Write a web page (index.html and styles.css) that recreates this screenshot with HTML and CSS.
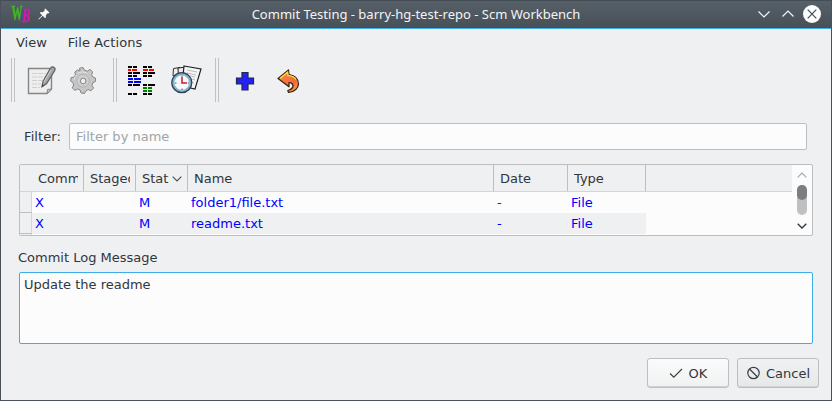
FILE: index.html
```html
<!DOCTYPE html>
<html lang="en">
<head>
<meta charset="utf-8">
<title>Commit Testing - barry-hg-test-repo - Scm Workbench</title>
<link rel="stylesheet" href="styles.css">
</head>
<body>
<div class="window">
  <header class="titlebar">
    <div class="title-left">
      <svg class="logo" width="20" height="20" viewBox="0 0 20 20">
        <g font-family="Liberation Serif" font-weight="bold">
          <text x="0.5" y="15.5" font-size="20" textLength="11" lengthAdjust="spacingAndGlyphs" fill="#40b81c" stroke="#40b81c" stroke-width=".4">W</text>
          <text x="10.6" y="18.4" font-size="18" font-style="italic" textLength="8" lengthAdjust="spacingAndGlyphs" fill="#d613b4" stroke="#d613b4" stroke-width=".3">B</text>
        </g>
      </svg>
      <svg class="pin" width="12" height="12" viewBox="0 0 12 12">
        <path d="M7.2 0.6 11.4 4.6 10.5 5.4 9.9 5.1 7.8 7.2 7.9 9.3 7.1 10.2 4.8 7.8 0.9 11.6 0.4 11.1 4.2 7.2 1.9 4.9 2.7 4.1 4.9 4.2 7 2.1 6.4 1.4Z" fill="#fcfcfc"/>
      </svg>
    </div>
    <h1 class="title">Commit Testing - barry-hg-test-repo - Scm Workbench</h1>
    <div class="title-buttons">
      <svg width="70" height="20" viewBox="0 0 70 20" fill="none">
        <path d="M4.5 7.5 10 13 15.5 7.5M28.5 12.5 34 7 39.5 12.5" stroke="#f4f5f5" stroke-width="1.2"/>
        <circle cx="58" cy="10" r="9" fill="#fcfcfc"/>
        <path d="M53.7 5.7 62.3 14.3M62.3 5.7 53.7 14.3" stroke="#414a52" stroke-width="1.2"/>
      </svg>
    </div>
  </header>

  <nav class="menubar"><span>View</span><span class="wide">File Actions</span></nav>

  <div class="toolbar">
    <div class="tools">
      <i class="handle"></i>
      <svg class="icon edit" width="32" height="32" viewBox="0 0 32 32">
        <path d="M3.5 4.5H26.5V25L22 29.5H3.5Z" fill="#eeeeee" stroke="#858585" stroke-width="1.4"/>
        <path d="M7 9.5H21M7 13H20M7 16.5H18M7 20H16M7 23.5H15" stroke="#d0d0d0" stroke-width="1.2" stroke-dasharray="5 1"/>
        <path d="M22 29.5 22.5 25.5 26.5 25Z" fill="#d5d5d5" stroke="#858585"/>
        <path d="M17 22.7 18 17.5 25.2 4.5Q27 1.8 29.2 3.4 30.8 4.5 29.5 7L21.5 19.8Z" fill="#a4a4a4" stroke="#606060" stroke-width="1.2"/>
        <path d="M19 18 26 6" stroke="#d4d4d4"/><path d="M16.7 23 17.5 20.5 19 21.5Z" fill="#333"/>
      </svg>
      <svg class="icon gear" width="32" height="32" viewBox="0 0 32 32">
        <g fill="#c6c6c6" stroke="#858585">
          <path d="M13 7 12.5 4.2 16 3.5 17.5 6.3 20.3 7.2 23 5.4 25.6 7.8 24.6 10.8 26 13.2 28.5 14 28.4 17.5 25.8 18.8 25 21.5 26.6 24 24.1 26.7 21.2 25.6 18.7 27 17.5 29.5 14 28.9 13.2 26.1 10.5 25 7.7 26.4 5.3 23.8 6.7 21 5.8 18.5 3.5 17 4.2 13.5 7 13.2 8.5 10.9 7.8 8 10.5 6Z" stroke-linejoin="round"/>
          <circle cx="16" cy="16.7" r="6.3" fill="#cecece" stroke="#b4b4b4"/>
          <circle cx="16.2" cy="17" r="2.8" fill="#ededed"/>
        </g>
        <path d="M11 9Q15 6.5 20 9M7 16Q7 12 10 11" fill="none" stroke="#e2e2e2"/>
      </svg>
    </div>
    <div class="tools">
      <i class="handle"></i>
      <svg class="icon diff" width="32" height="32" viewBox="0 0 32 32" shape-rendering="crispEdges">
        <path d="M4 3h4M9 3h4M19 3h4M24 3h4M4 9h4M9 9h7M19 9h4M24 9h7M4 12h4M9 12h4M19 12h4M24 12h4M4 21h4M9 21h7M19 21h4M24 21h7M4 30h4M9 30h4M19 30h4M24 30h4" stroke="#000" stroke-width="2"/>
        <path d="M4 6h3M8 6h5M19 6h5M25 6h5" stroke="#f00" stroke-width="2"/>
        <path d="M4 15h5M10 15h7M4 18h5M10 18h7" stroke="#00f" stroke-width="2"/>
        <path d="M19 24h4M24 24h4M19 27h4M24 27h4" stroke="#008000" stroke-width="2"/>
      </svg>
      <svg class="icon history" width="32" height="32" viewBox="0 0 32 32">
        <path d="M3.5 4.5 10 3.5 10 9 3 12Z" fill="#eee" stroke="#333"/>
        <path d="M8 4 17 3 18 22 9 22Z" fill="#eee" stroke="#222"/>
        <path d="M14 2 31 5 25 25 12 22Z" fill="#f5f5f5" stroke="#222" stroke-width="1.2"/>
        <path d="M17 6 27 8M17 9 26 11M20 12 25 13M22 15 25 16M22 18 24 19" stroke="#bbb"/>
        <circle cx="11.8" cy="18.7" r="10" fill="#7cabcc" stroke="#34414c" stroke-width="1.2"/>
        <circle cx="11.8" cy="18.7" r="7.5" fill="#f8fbfd" stroke="#a8c9dd"/>
        <path d="M12 13V19H17" fill="none" stroke="#d81818" stroke-width="1.5"/>
        <path d="M12 11.8V13M5 19H6.5M12 24.5V26M18 19H19" stroke="#555"/>
      </svg>
    </div>
    <div class="tools">
      <i class="handle"></i>
      <svg class="icon add" width="32" height="32" viewBox="0 0 32 32">
        <path d="M13 8.5H19V14H24.5V20H19V26H13V20H7.5V14H13Z" fill="#2222f5" stroke="#26264a" stroke-width="1.2"/>
      </svg>
      <svg class="icon undo" width="32" height="32" viewBox="0 0 32 32">
        <defs><linearGradient id="arrow" x1="0" y1="0" x2="1" y2="1"><stop offset="0" stop-color="#f4c234"/><stop offset=".35" stop-color="#f57845"/><stop offset=".7" stop-color="#f26a3c"/><stop offset="1" stop-color="#ffd42a"/></linearGradient></defs>
        <path d="M6 14.5 16.5 6 17 10.5Q26.5 12 26.5 20 26 27 16.5 28.5L15.8 26.5Q21.5 24.5 21 21.5 20.3 18.5 17 18.5L17 22.8Z" fill="url(#arrow)" stroke="#302010" stroke-width="1.2" stroke-linejoin="round"/>
        <path d="M8 14.2 15.7 8 16 11.7Q22 12 24 15.5" fill="none" stroke="#ffe23c" stroke-width="1.2"/>
      </svg>
    </div>
  </div>

  <main class="content">
    <label class="filter"><span class="wide">Filter:</span><input type="text" placeholder="Filter by name"></label>

    <div class="table">
      <div class="grid">
        <div class="row head">
          <b></b><span>Comm</span><span>Staged</span><span class="sorted">Stat<svg width="10" height="6" viewBox="0 0 10 6"><path d="M.7.7 5 5 9.3.7" fill="none" stroke="#4d5257" stroke-width="1.2"/></svg></span><span>Name</span><span>Date</span><span>Type</span>
        </div>
        <div class="row"><b></b><span>X</span><span></span><span>M</span><span>folder1/file.txt</span><span class="none">-</span><span>File</span></div>
        <div class="row alt"><b></b><span>X</span><span></span><span>M</span><span>readme.txt</span><span>-</span><span>File</span></div>
        <div class="row rest"><b></b></div>
      </div>
      <div class="scroll">
        <svg width="10" height="6" viewBox="0 0 10 6"><path d="M.7 5.3 5 1 9.3 5.3" fill="none" stroke="#a5a8aa" stroke-width="1.2"/></svg>
        <div class="track"><div class="thumb"></div></div>
        <svg width="10" height="6" viewBox="0 0 10 6"><path d="M.7.7 5 5 9.3.7" fill="none" stroke="#31363b" stroke-width="1.3"/></svg>
      </div>
    </div>

    <label class="caption" for="message">Commit Log Message</label>
    <textarea id="message" class="message">Update the readme</textarea>

    <div class="actions">
      <button class="ok"><svg width="14" height="14" viewBox="0 0 14 14"><path d="M1 7.5 4.8 11.2 13 3" fill="none" stroke="#3b4045" stroke-width="1.2"/></svg>OK</button>
      <button class="cancel"><svg width="14" height="14" viewBox="0 0 14 14" fill="none" stroke="#3b4045" stroke-width="1.2"><circle cx="7.5" cy="7" r="5.7"/><path d="M3.5 3 11.5 11"/></svg>Cancel</button>
    </div>
  </main>
</div>
</body>
</html>
```
FILE: styles.css
```css
* { box-sizing: border-box; }
body { margin: 0; font: 13px/15px "DejaVu Sans", sans-serif; color: #31363b; }
svg { display: block; flex: none; }

.window {
  width: 832px; height: 401px;
  display: flex; flex-direction: column;
  background: #eff0f1;
  border: 1px solid #4a5159; border-top: 0;
  overflow: hidden;
}

.titlebar {
  height: 29px; flex: none;
  display: grid; grid-template-columns: 76px 1fr 76px; align-items: center;
  background: linear-gradient(#566069, #475057);
  border-top: 1px solid #434b53; border-bottom: 1px solid #3daee9;
}
.title-left { display: flex; align-items: center; padding: 0 0 2px 10px; }
.logo { overflow: visible; }
.pin { margin-left: 7px; }
.title { margin: 0; padding-bottom: 2px; text-align: center; font: 13px/18px "Noto Sans", sans-serif; color: #f3f4f4; white-space: nowrap; }
.title-buttons { margin: 0 0 2px -1px; }

.menubar { height: 27px; flex: none; display: flex; gap: 21px; padding: 6px 0 0 15px; }
.wide { letter-spacing: .1px; }

.toolbar { height: 48px; flex: none; display: flex; padding: 2px 0 0 10px; }
.tools { display: flex; width: 102px; }
.handle { width: 4px; height: 44px; border: solid #bfc1c2; border-width: 0 1px; }
.icon { margin-top: 6px; }
.edit { margin-left: 10px; }
.gear { margin-left: 10px; }
.diff { margin-left: 7px; }
.history { margin-left: 14px; }
.add { margin-left: 10px; }
.undo { margin-left: 11px; }

.content { flex: 1; display: flex; flex-direction: column; padding: 19px 18px 12px; }
.filter { display: flex; align-items: center; gap: 8px; padding: 0 6px 0 5px; }
.filter input {
  flex: 1; height: 27px; padding: 0 6px;
  font: inherit; color: inherit;
  background: #fcfcfc; border: 1px solid #bcbebf; border-radius: 2px; outline: 0;
}
.filter input::placeholder { color: #a1a4a6; opacity: 1; }

.table {
  display: flex; height: 72px; margin-top: 14px;
  background: #fcfcfc; border: 1px solid #bcbebf; border-radius: 2px; overflow: hidden;
}
.grid { width: 772px; }
.row { display: grid; grid-template-columns: 12px 52px 52px 52px 306px 74px 78px; height: 21px; color: #0000ff; }
.row b { background: #eff0f1; border-right: 1px solid #d4d5d6; border-bottom: 1px solid #bcbebf; }
.row span { padding: 3px 0 0 3px; white-space: nowrap; overflow: hidden; }
.row .none { color: #31363b; }
.head { height: 27px; color: #31363b; background: #eff0f1; border-bottom: 1px solid #d4d5d6; }
.head b { border: 0; }
.head span { display: flex; padding: 6px 0 0 6px; border-right: 1px solid #bcbebf; }
.head span { overflow: clip; overflow-clip-margin: content-box; padding-right: 5px; }
.head .sorted { align-items: flex-start; gap: 4px; padding-right: 0; }
.sorted svg { margin-top: 5px; }
.alt span { background: #eff0f1; }
.rest { height: 1px; }
.rest b { border-bottom: 0; }
.scroll { flex: 1; display: flex; flex-direction: column; align-items: center; padding-top: 7px; }
.track { width: 10px; height: 30px; margin: 7px 0 8px; border-radius: 5px; background: #bfc0c1; }
.thumb { height: 15px; border-radius: 5px; background: #7b7f82; }

.caption { margin: 14px 0 0 -1px; }
.message {
  height: 72px; margin: 7px 0 0; padding: 4px;
  font: inherit; color: inherit; resize: none;
  background: #fcfcfc; border: 1px solid #3daee9; border-radius: 2px; outline: 0;
}

.actions { display: flex; justify-content: flex-end; gap: 8px; margin: 14px -6px 0 0; }
.actions button {
  width: 82px; height: 30px; padding: 0;
  display: flex; align-items: center; justify-content: center; gap: 6px;
  font: inherit; color: inherit;
  background: linear-gradient(#fbfbfb, #f0f1f1);
  border: 1px solid #bcbebf; border-radius: 3px; box-shadow: inset 0 -1px #d1d2d3;
}
.actions .cancel { background: linear-gradient(#f0f1f2, #e7e8e9); }
```
